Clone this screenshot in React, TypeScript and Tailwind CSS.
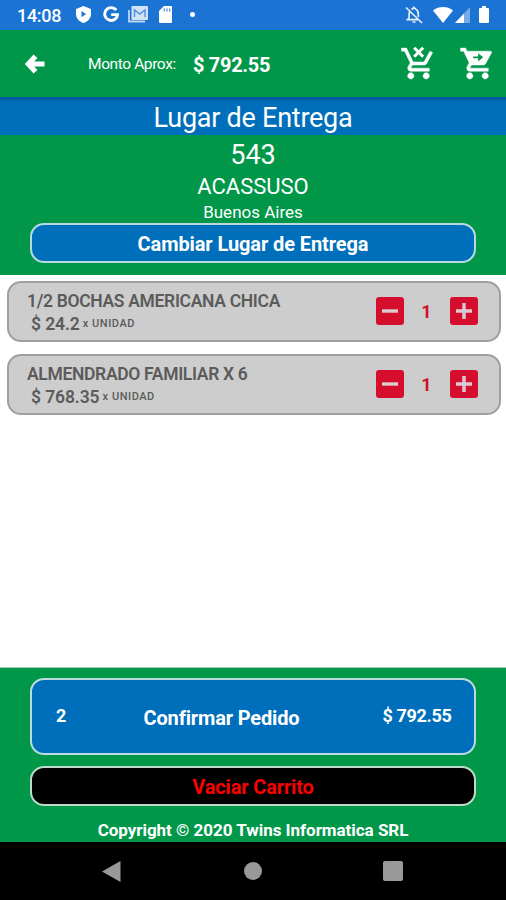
import type { ReactNode } from "react";

const WHEELS =
  "M7 18c-1.1 0-1.99.9-1.99 2S5.9 22 7 22s2-.9 2-2-.9-2-2-2zm10 0c-1.1 0-1.99.9-1.99 2s.89 2 1.99 2 2-.9 2-2-.9-2-2-2z";

function StatusBar() {
  return (
    <div className="flex h-[29.5px] shrink-0 items-center bg-[#1b74d4] pl-[17px] pr-[17px] text-white">
      <span className="w-[45px] whitespace-nowrap pt-[2px] text-[18px] font-medium leading-none tracking-[-0.3px]">14:08</span>
      <svg className="ml-[14px] h-[17px] w-[15px]" viewBox="0 0 15 17" fill="none">
        <path d="M7.500 0 15 3v5c0 4.200-3 7.600-7.500 9C3 15.600 0 12.200 0 8V3z" fill="currentColor" />
        <path d="M5.500 5 10 8l-4.500 3.200z" fill="#1b74d4" />
      </svg>
      <svg className="ml-[11.500px] h-[17px] w-[16px]" viewBox="0 0 16 17" fill="none" stroke="currentColor" strokeWidth="2.900">
        <path d="M13.200 4.100A6.400 6.400 0 1 0 14.500 8.600H8.200" />
      </svg>
      <svg className="ml-[9.500px] h-[17px] w-[20px]" viewBox="0 0 20 17" fill="none">
        <path d="M1 4v11.500h16" stroke="currentColor" strokeWidth="1.800" opacity=".7" />
        <rect x="3.500" y="0" width="16.500" height="14" rx="1" fill="currentColor" opacity=".8" />
        <path d="M6.500 11V4L11.800 8 17 4v7" stroke="#4f8fdc" strokeWidth="1.400" />
      </svg>
      <svg className="ml-[11px] h-[17px] w-[13px]" viewBox="0 0 13 17" fill="none">
        <path d="M5 0h7a1 1 0 0 1 1 1v15a1 1 0 0 1-1 1H1a1 1 0 0 1-1-1V5z" fill="currentColor" />
        <path d="M5.300 2.500v3M8 2.500v3M10.700 2.500v3" stroke="#1b74d4" strokeWidth="1" />
      </svg>
      <span className="ml-[17.500px] size-[5px] rounded-full bg-white" />
      <svg className="ml-auto h-[18px] w-[18px]" viewBox="0 0 18 18" fill="none" stroke="currentColor" strokeWidth="1.700" opacity=".9">
        <path d="M5 4.500C4 6 4 7 4 12l-1.500 1.700h11M6.500 3.500C7.500 2.800 8 3 8.800 1.500 9.800 3 13.300 3 13.300 8v3M7.500 16h3M1 1.500l16 15.500" />
      </svg>
      <svg className="ml-[9.500px] h-[16px] w-[20px]" viewBox="0 0 20 16">
        <path d="M10 16 0 3.500C5.500-1.100 14.500-1.100 20 3.500z" fill="currentColor" />
      </svg>
      <svg className="ml-[2.500px] h-[16px] w-[15px]" viewBox="0 0 15 16">
        <path d="M0 16 15 0v16z" fill="currentColor" opacity=".4" />
        <path d="M0 16 9 6.400V16z" fill="currentColor" />
      </svg>
      <svg className="ml-[9px] h-[17px] w-[10px]" viewBox="0 0 10 17">
        <path d="M3 0h4v2h2a1 1 0 0 1 1 1v13a1 1 0 0 1-1 1H1a1 1 0 0 1-1-1V3a1 1 0 0 1 1-1h2z" fill="currentColor" />
      </svg>
    </div>
  );
}

function Header() {
  return (
    <header className="flex h-[67.500px] shrink-0 items-center bg-[#009749] pl-[25px] pt-[2px] text-white">
      <svg className="h-[20px] w-[20px]" viewBox="0 0 20 20" fill="none" stroke="currentColor" strokeWidth="5.200">
        <path d="M10.500 2.200 3.400 10l7.100 7.800M4 10h15.500" />
      </svg>
      <span className="ml-[43px] w-[105px] whitespace-nowrap text-[15.500px] leading-none tracking-[-0.4px]">Monto Aprox:</span>
      <span className="w-[206.500px] whitespace-nowrap pt-[2px] text-[20px] font-bold leading-none tracking-[-0.3px]">$ 792.55</span>
      <svg className="-mt-px h-[37px] w-[37px]" viewBox="0 0 24 24" fill="currentColor">
        <path d={WHEELS} stroke="currentColor" strokeWidth=".4" />
        <path stroke="currentColor" strokeWidth=".3" d="m7.170 14.750.03-.12.9-1.630h7.450c.75 0 1.410-.41 1.750-1.030l3.860-7.010L19.420 4h-.01l-1.100 2-2.760 5H8.530l-.13-.27L6.160 6l-.95-2-.94-2H1v2h2l3.600 7.590-1.350 2.450c-.16.28-.25.61-.25.96 0 1.100.9 2 2 2h12v-2H7.420c-.13 0-.25-.11-.25-.25z" />
        <path d="m9.200 1.800 5.800 5.800m0-5.800L9.200 7.600" fill="none" stroke="currentColor" strokeWidth="2" />
      </svg>
      <svg className="-mt-px ml-[22px] h-[37px] w-[37px]" viewBox="0 0 24 24" fill="currentColor">
        <path d={WHEELS} stroke="currentColor" strokeWidth=".4" />
        <path stroke="currentColor" strokeWidth=".3" d="M1 2v2h2l3.600 7.590-1.350 2.450c-.16.28-.25.61-.25.96 0 1.100.9 2 2 2h12v-2H7.420c-.14 0-.25-.11-.25-.25l.03-.12.9-1.630h7.450c.75 0 1.410-.41 1.750-1.030l3.700-6.700A.85.85 0 0 0 20.500 4H5.210l-.94-2z" />
        <path d="M9.200 8h4.500M13 6.500v3L14.800 8z" stroke="#009749" strokeWidth="1.100" fill="#009749" />
      </svg>
    </header>
  );
}

function Delivery() {
  return (
    <section className="flex h-[177.500px] shrink-0 flex-col items-center bg-[#009749] text-white">
      <div className="flex h-[37.500px] w-full items-center justify-center bg-[#006fbb] bg-linear-to-b from-[#00579d] to-[#006fbb] to-15%">
        <span className="whitespace-nowrap pt-[5px] text-[27px] leading-none tracking-[-0.25px]">Lugar de Entrega</span>
      </div>
      <span className="h-[36px] pt-[7px] text-[27px] leading-[27px]">543</span>
      <span className="h-[31px] pt-[5px] text-[22px] leading-[22px]">ACASSUSO</span>
      <span className="h-[21px] whitespace-nowrap pt-[2px] text-[17px] leading-[17px]">Buenos Aires</span>
      <button className="flex h-[40px] w-[446px] items-center justify-center rounded-[14px] border-2 border-[#b8dade] bg-[#006fbb] pt-[3px] text-[20px] font-bold leading-none">
        <span className="whitespace-nowrap tracking-[-0.1px]">Cambiar Lugar de Entrega</span>
      </button>
    </section>
  );
}

function StepButton({ children }: { children: ReactNode }) {
  return (
    <button className="flex size-[28px] items-center justify-center rounded-[3px] bg-[#d60e2d]">
      <svg className="size-[18px]" viewBox="0 0 18 18" fill="none" stroke="#dccbd3" strokeWidth="3.400">{children}</svg>
    </button>
  );
}

function Item({ name, price }: { name: string; price: string }) {
  return (
    <li className="flex h-[61.500px] w-[494px] items-center rounded-[14px] border-2 border-[#a0a0a0] bg-[#cdcdcd] pl-[18px] text-[#5b5b5b]">
      <div className="w-[349px] whitespace-nowrap pt-[4px]">
        <div className="h-[23px] text-[17.500px] font-semibold leading-[23px] tracking-[-0.33px]">{name}</div>
        <div className="flex h-[23px] items-start pl-[4px]">
          <span className="text-[17.500px] font-semibold leading-[23px] tracking-[-0.1px]">{price}</span>
          <span className="ml-[3px] text-[11px] font-medium leading-[21px] tracking-[0.55px]">x UNIDAD</span>
        </div>
      </div>
      <StepButton><path d="M1 9h16" /></StepButton>
      <span className="w-[46px] pr-px pt-[2px] text-center text-[18px] font-bold leading-none text-[#d60e2d]">1</span>
      <StepButton><path d="M1 9h16M9 1v16" /></StepButton>
    </li>
  );
}

export default function App() {
  return (
    <main className="flex h-[900px] w-[506px] flex-col overflow-hidden bg-white font-['Roboto',sans-serif]">
      <StatusBar />
      <Header />
      <Delivery />
      <ul className="flex flex-1 flex-col gap-[11.500px] pl-[7px] pt-[6px]">
        <Item name="1/2 BOCHAS AMERICANA CHICA" price="$ 24.2" />
        <Item name="ALMENDRADO FAMILIAR X 6" price="$ 768.35" />
      </ul>
      <footer className="flex h-[175.500px] shrink-0 flex-col items-center border-t border-[#9bcfb2] bg-[#009749] pt-[10.500px] text-white">
        <button className="flex h-[77px] w-[446px] items-center rounded-[14px] border-2 border-[#bbdcde] bg-[#006fbb] pl-[24px] text-left font-bold leading-none">
          <span className="w-[87.500px] pb-px text-[18px]">2</span>
          <span className="w-[239px] whitespace-nowrap pt-[2px] text-[20px] tracking-[-0.15px]">Confirmar Pedido</span>
          <span className="whitespace-nowrap pb-px text-[18px] tracking-[-0.35px]">$ 792.55</span>
        </button>
        <button className="mt-[11px] flex h-[40px] w-[446px] items-center justify-center rounded-[14px] border-2 border-[#bcdcc9] bg-black pt-[2px] text-[20px] font-bold leading-none text-[#fa0000]">
          <span className="whitespace-nowrap tracking-[-0.15px]">Vaciar Carrito</span>
        </button>
        <span className="mt-[13.500px] whitespace-nowrap text-[17px] font-bold leading-[20px] tracking-[-0.03px]">Copyright © 2020 Twins Informatica SRL</span>
      </footer>
      <nav className="flex h-[58px] shrink-0 items-center bg-black pl-[102px] text-[#999999]">
        <svg className="h-[21px] w-[19px]" viewBox="0 0 19 21" fill="currentColor"><path d="M0 10.500 18.500 0v21z" /></svg>
        <span className="ml-[123px] size-[18px] rounded-full bg-[#999999]" />
        <span className="ml-[121px] size-[20px] rounded-[2px] bg-[#999999]" />
      </nav>
    </main>
  );
}
